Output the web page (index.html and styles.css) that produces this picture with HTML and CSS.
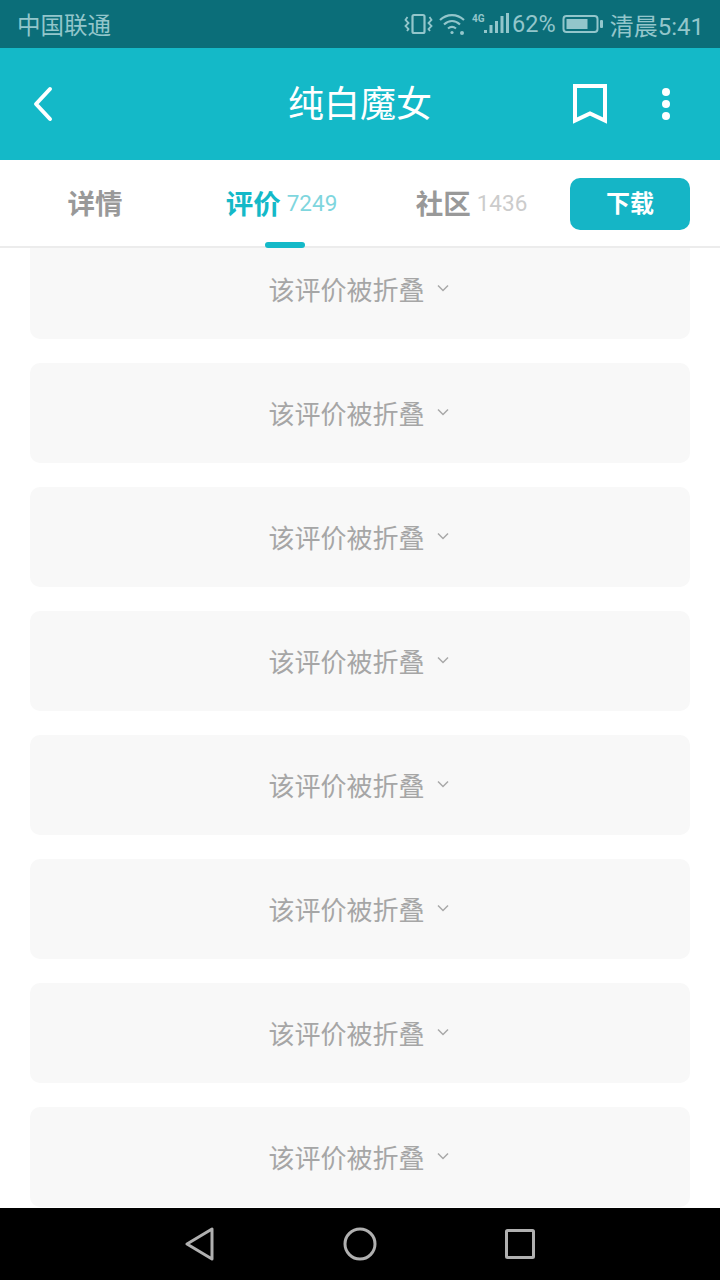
FILE: index.html
```html
<!DOCTYPE html>
<html lang="zh-CN">
<head>
    <meta charset="UTF-8">
    <meta name="viewport" content="width=device-width, initial-scale=1.0">
    <title>纯白魔女</title>
    <link rel="stylesheet" href="styles.css">
</head>
<body>
    <div class="phone">
        <div class="status-bar">
            <span class="carrier">中国联通</span>
            <div class="status-right">
                <svg class="ic-vibrate" width="30" height="24" viewBox="0 0 30 24" fill="none" stroke="currentColor">
                    <rect x="8.500" y="3" width="12" height="18" rx="1.500" stroke-width="2.200"/>
                    <path d="M3.500 5 L1.500 8 L4.500 11 L1.500 14 L4.500 17 L3 19" stroke-width="1.800"/>
                    <path d="M25.500 5 L27.500 8 L24.500 11 L27.500 14 L24.500 17 L26 19" stroke-width="1.800"/>
                </svg>
                <svg class="ic-wifi" width="30" height="24" viewBox="0 0 30 24" fill="none" stroke="currentColor" stroke-width="2.200">
                    <path d="M2 8 C9 1.500 19 1.500 26 8"/>
                    <path d="M6 12.500 C11 8 17 8 22 12.500"/>
                    <path d="M10 16.500 C12.500 14.500 15.500 14.500 18 16.500"/>
                    <circle cx="14" cy="20.500" r="1.600" fill="currentColor" stroke="none"/>
                    <circle cx="24" cy="21" r="2" fill="currentColor" stroke="none"/>
                </svg>
                <span class="net-type">4G</span>
                <svg class="ic-signal" width="25" height="24" viewBox="0 0 25 24" fill="currentColor">
                    <rect x="0" y="18" width="3" height="3"/>
                    <rect x="5.500" y="13" width="3" height="8"/>
                    <rect x="11" y="9" width="3" height="12"/>
                    <rect x="16.500" y="4" width="3" height="17"/>
                    <rect x="22" y="1" width="3" height="20"/>
                </svg>
                <span class="battery-pct">62%</span>
                <svg class="ic-battery" width="42" height="24" viewBox="0 0 42 24" fill="none">
                    <rect x="1.500" y="4" width="34" height="16" rx="3" stroke="currentColor" stroke-width="2"/>
                    <rect x="4.500" y="7" width="21" height="10" fill="currentColor"/>
                    <rect x="38" y="8" width="3" height="8" rx="1" fill="currentColor"/>
                </svg>
                <span class="clock">清晨5:41</span>
            </div>
        </div>

        <header class="app-bar">
            <svg class="ic-back" width="24" height="36" viewBox="0 0 24 36" fill="none" stroke="#fff" stroke-width="4" stroke-linecap="round" stroke-linejoin="round">
                <path d="M18 3 L4 18 L18 33"/>
            </svg>
            <h1 class="app-title">纯白魔女</h1>
            <svg class="ic-bookmark" width="34" height="40" viewBox="0 0 34 40" fill="none" stroke="#fff" stroke-width="4">
                <path d="M2 2 H32 V36.500 L17 29.500 L2 36.500 Z"/>
            </svg>
            <div class="more-dots"><i></i><i></i><i></i></div>
        </header>

        <nav class="tabs">
            <div class="tab"><span class="tab-name">详情</span></div>
            <div class="tab active"><span class="tab-name">评价</span><span class="tab-count">7249</span></div>
            <div class="tab"><span class="tab-name">社区</span><span class="tab-count">1436</span></div>
            <div class="tab-action"><button class="btn-download">下载</button></div>
        </nav>

        <main class="review-list" id="list"></main>

        <footer class="nav-bar">
            <svg width="30" height="34" viewBox="0 0 30 34" fill="none" stroke="#b0b0b0" stroke-width="3" stroke-linejoin="round"><path d="M27 2 V32 L2 17 Z"/></svg>
            <svg width="34" height="34" viewBox="0 0 34 34" fill="none" stroke="#b0b0b0" stroke-width="3"><circle cx="17" cy="17" r="15"/></svg>
            <svg width="30" height="30" viewBox="0 0 30 30" fill="none" stroke="#b0b0b0" stroke-width="3" stroke-linejoin="round"><rect x="1.500" y="1.500" width="27" height="27" rx="1"/></svg>
        </footer>
    </div>
    <script>
        // 折叠的评价，列表已经滚动过，第一条被标签栏盖住
        const list = document.getElementById("list");
        for (let i = 0; i < 8; i++) {
            const div = document.createElement("div");
            div.className = "folded";
            div.innerHTML = `<span>该评价被折叠</span>
                <svg width="12" height="8" viewBox="0 0 12 8" fill="none" stroke="#a8a8a8" stroke-width="1.500"><path d="M1 1.500 L6 6.500 L11 1.500"/></svg>`;
            list.appendChild(div);
        }
    </script>
</body>
</html>
```
FILE: styles.css
```css
* {
    box-sizing: border-box;
}
body {
    margin: 0;
    padding: 0;
    background: #fff;
    font-family: Roboto, "Noto Sans CJK SC", sans-serif;
}
.phone {
    width: 720px;
    height: 1280px;
    display: flex;
    flex-direction: column;
    overflow: hidden;
}
.status-bar {
    height: 48px;
    flex-shrink: 0;
    background: #0b6e79;
    color: #93c6cb;
    display: flex;
    align-items: center;
    justify-content: space-between;
    padding: 0 16px 0 17px;
    font-size: 23.5px;
}
.status-right {
    display: flex;
    align-items: center;
}
.ic-vibrate {
    margin-right: 4px;
}
.net-type {
    font-size: 10px;
    font-weight: 700;
    width: 14px;
    margin: -12px 0 0 4px;
}
.ic-signal {
    margin-left: -2px;
}
.battery-pct {
    margin-left: 3px;
}
.ic-battery {
    margin-left: 6px;
}
.clock {
    margin-left: 6px;
    font-size: 24px;
}
.app-bar {
    height: 112px;
    flex-shrink: 0;
    background: #14b9c8;
    display: flex;
    align-items: center;
    position: relative;
    padding: 0 0 0 32px;
}
.ic-back {
    margin-top: -1px;
}
.app-title {
    position: absolute;
    left: 0;
    right: 0;
    top: 32px;
    margin: 0;
    text-align: center;
    color: #fff;
    font-size: 36px;
    line-height: 50px;
    font-weight: 400;
}
.ic-bookmark {
    position: absolute;
    left: 573px;
    top: 36px;
}
.more-dots {
    position: absolute;
    left: 662px;
    top: 40px;
    display: flex;
    flex-direction: column;
    gap: 4px;
}
.more-dots i {
    width: 8px;
    height: 8px;
    border-radius: 50%;
    background: #fff;
}
.tabs {
    height: 88px;
    flex-shrink: 0;
    background: #fff;
    border-bottom: 2px solid #ececec;
    display: grid;
    grid-template-columns: 190px 183px 197px 150px;
    position: relative;
    z-index: 2;
}
.tab {
    position: relative;
    display: flex;
    align-items: center;
    justify-content: center;
    gap: 6px;
    padding-bottom: 3px;
}
.tab-name {
    font-size: 27.5px;
    font-weight: 700;
    color: #999;
}
.tab-count {
    font-size: 22.5px;
    color: #ccc;
    padding-top: 2px;
}
.tab.active .tab-name {
    color: #14b9c8;
}
.tab.active .tab-count {
    color: #7fd6de;
}
.tab.active::after {
    content: "";
    position: absolute;
    left: 75px;
    bottom: -2px;
    width: 40px;
    height: 6px;
    border-radius: 3px;
    background: #14b9c8;
}
.tab-action {
    padding: 18px 30px 0 0;
    display: flex;
    justify-content: flex-end;
    align-items: flex-start;
}
.btn-download {
    width: 120px;
    height: 52px;
    border: none;
    border-radius: 10px;
    background: #15b5c6;
    color: #fff;
    font-family: inherit;
    font-size: 24px;
    font-weight: 700;
    padding: 0 0 5px;
}
.review-list {
    flex: 1;
    min-height: 0;
    overflow: hidden;
    display: flex;
    flex-direction: column;
    justify-content: flex-end;
    gap: 24px;
    padding: 0 30px 1px 30px;
}
.folded {
    height: 100px;
    flex-shrink: 0;
    background: #f8f8f8;
    border-radius: 10px;
    display: flex;
    align-items: center;
    justify-content: center;
    gap: 12px;
    color: #a6a6a6;
    font-size: 26px;
    padding: 0 3px 2px 0;
}
.nav-bar {
    height: 72px;
    flex-shrink: 0;
    background: #000;
    display: grid;
    grid-template-columns: 160px 160px 160px;
    justify-content: center;
    justify-items: center;
    align-items: center;
}
```
